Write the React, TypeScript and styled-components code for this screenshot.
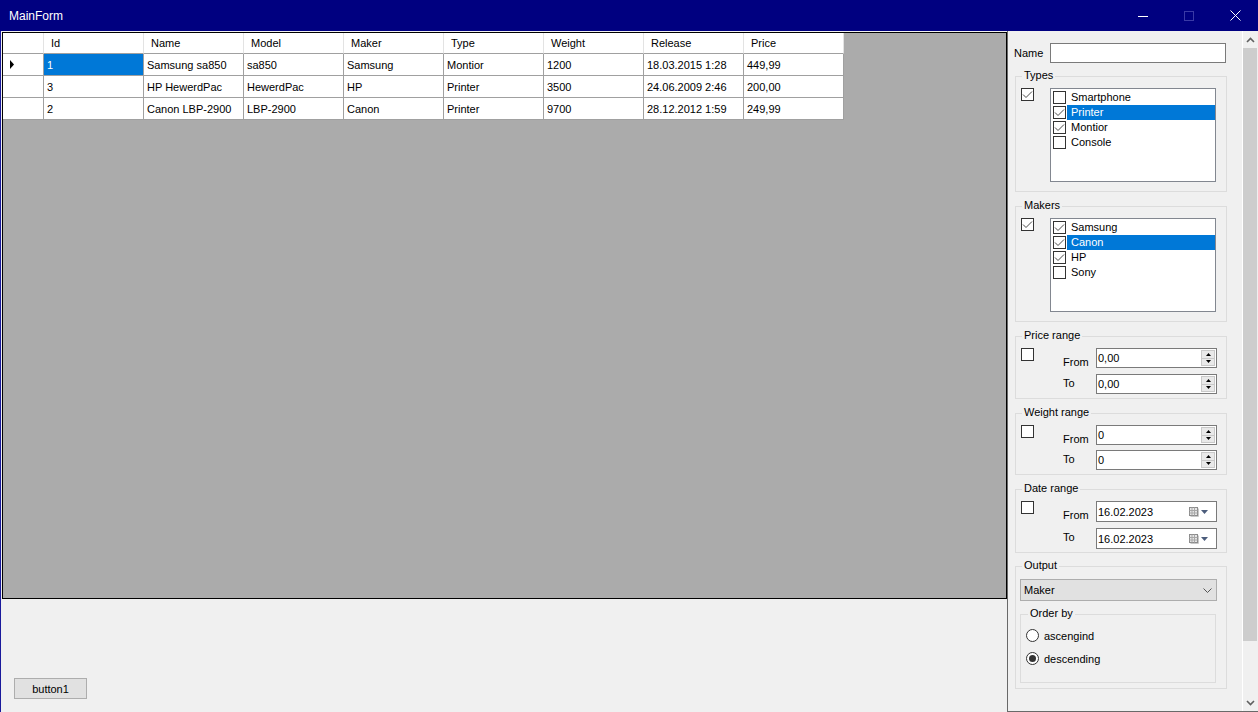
import React from 'react';
import styled, { createGlobalStyle } from 'styled-components';

const GlobalStyle = createGlobalStyle`
  html, body {
    margin: 0;
    padding: 0;
    background: #f0f0f0;
  }
  body {
    font-family: 'Liberation Sans', Arial, sans-serif;
    font-size: 11px;
    color: #000;
  }
  * {
    box-sizing: border-box;
  }
`;

const columns = ['Id', 'Name', 'Model', 'Maker', 'Type', 'Weight', 'Release', 'Price'];

const rows = [
  ['1', 'Samsung sa850', 'sa850', 'Samsung', 'Montior', '1200', '18.03.2015 1:28', '449,99'],
  ['3', 'HP HewerdPac', 'HewerdPac', 'HP', 'Printer', '3500', '24.06.2009 2:46', '200,00'],
  ['2', 'Canon LBP-2900', 'LBP-2900', 'Canon', 'Printer', '9700', '28.12.2012 1:59', '249,99'],
];

const types = [
  { label: 'Smartphone', checked: false, selected: false },
  { label: 'Printer', checked: true, selected: true },
  { label: 'Montior', checked: true, selected: false },
  { label: 'Console', checked: false, selected: false },
];

const makers = [
  { label: 'Samsung', checked: true, selected: false },
  { label: 'Canon', checked: true, selected: true },
  { label: 'HP', checked: true, selected: false },
  { label: 'Sony', checked: false, selected: false },
];

const Window = styled.div`
  width: 1258px;
  height: 712px;
  display: flex;
  flex-direction: column;
  overflow: hidden;
  background: #f0f0f0;
`;

const TitleBar = styled.div`
  height: 31px;
  flex: none;
  display: flex;
  align-items: center;
  background: #000080;
  color: #fff;
  font-size: 12px;
  padding-left: 9px;
`;

const Title = styled.span`
  flex: 1;
`;

const CaptionButton = styled.div`
  width: 46px;
  height: 31px;
  display: flex;
  align-items: center;
  justify-content: center;
`;

const Body = styled.div`
  flex: 1;
  display: flex;
  border-left: 1px solid #1a1a9c;
  min-height: 0;
`;

const LeftArea = styled.div`
  width: 1006px;
  display: flex;
  flex-direction: column;
  padding-top: 1px;
`;

const GridView = styled.div`
  margin-left: 1px;
  width: 1005px;
  height: 567px;
  border: 1px solid #000;
  background: #ababab;
  flex: none;
`;

const Table = styled.div`
  display: grid;
  grid-template-columns: 41px repeat(8, 100px);
  width: 841px;
`;

const Cell = styled.div<{ $head?: boolean; $selected?: boolean; $lead?: boolean }>`
  height: ${(p) => (p.$head ? 21 : 22)}px;
  display: flex;
  align-items: center;
  white-space: nowrap;
  overflow: hidden;
  padding-left: ${(p) => (p.$head ? 7 : 3)}px;
  background: ${(p) => (p.$selected ? '#0078d7' : '#fff')};
  color: ${(p) => (p.$selected ? '#fff' : '#000')};
  border-right: 1px solid ${(p) => (p.$head ? '#e3e3e3' : '#a0a0a0')};
  border-bottom: 1px solid #a0a0a0;
`;

const Footer = styled.div`
  flex: 1;
  display: flex;
  align-items: flex-end;
  padding: 0 0 13px 13px;
`;

const Button = styled.div`
  width: 73px;
  height: 21px;
  display: flex;
  align-items: center;
  justify-content: center;
  background: #e1e1e1;
  border: 1px solid #adadad;
`;

const SidePanel = styled.div`
  width: 251px;
  display: flex;
  border-left: 1px solid #696969;
  border-bottom: 1px solid #696969;
`;

const PanelBody = styled.div`
  width: 234px;
  padding: 12px 0 0 7px;
  display: flex;
  flex-direction: column;
`;

const NameRow = styled.div`
  display: flex;
  align-items: center;
  margin-left: -1px;
`;

const NameLabel = styled.span`
  width: 36px;
`;

const TextBox = styled.div<{ $width: number; $height?: number }>`
  width: ${(p) => p.$width}px;
  height: ${(p) => p.$height ?? 20}px;
  border: 1px solid #7a7a7a;
  background: #fff;
  display: flex;
  align-items: center;
`;

const Group = styled.div<{ $mt: number; $height: number; $width?: number; $pt?: number; $pl?: number }>`
  position: relative;
  width: ${(p) => p.$width ?? 212}px;
  height: ${(p) => p.$height}px;
  margin-top: ${(p) => p.$mt}px;
  border: 1px solid #dcdcdc;
  padding: ${(p) => p.$pt ?? 11}px 0 0 ${(p) => p.$pl ?? 5}px;
  flex: none;
`;

const Legend = styled.span<{ $left?: number }>`
  position: absolute;
  top: -8px;
  left: ${(p) => p.$left ?? 6}px;
  padding: 0 2px;
  line-height: 13px;
  background: #f0f0f0;
`;

const GroupRow = styled.div`
  display: flex;
  align-items: flex-start;
`;

const Box = styled.div`
  width: 13px;
  height: 13px;
  border: 1px solid #333;
  background: #fff;
  flex: none;
  display: flex;
  align-items: center;
  justify-content: center;
`;

const ListBox = styled.div`
  width: 166px;
  height: 94px;
  margin-left: 16px;
  border: 1px solid #828790;
  background: #fff;
  padding: 1px 0 0 2px;
`;

const ListItem = styled.div`
  height: 15px;
  display: flex;
  align-items: center;
`;

const ItemLabel = styled.span<{ $selected: boolean }>`
  flex: 1;
  height: 15px;
  line-height: 15px;
  margin-left: 1px;
  padding-left: 4px;
  background: ${(p) => (p.$selected ? '#0078d7' : 'transparent')};
  color: ${(p) => (p.$selected ? '#fff' : '#000')};
`;

const RangeGrid = styled.div<{ $rowHeight: number; $gap: number }>`
  display: grid;
  grid-template-columns: 42px 33px 121px;
  grid-template-rows: ${(p) => p.$rowHeight}px ${(p) => p.$rowHeight}px;
  row-gap: ${(p) => p.$gap}px;
`;

const RangeLabel = styled.span<{ $offset: number }>`
  line-height: 13px;
  margin-top: ${(p) => p.$offset}px;
`;

const Value = styled.span`
  flex: 1;
  padding-left: 1px;
`;

const Spin = styled.div`
  width: 14px;
  height: 16px;
  margin: 1px 1px 0 0;
  align-self: flex-start;
  display: flex;
  flex-direction: column;
`;

const SpinButton = styled.div`
  flex: 1;
  background: #e9e9e9;
  border: 1px solid #c9c9c9;
  display: flex;
  align-items: center;
  justify-content: center;
  & + & {
    border-top: none;
  }
`;

const DateIcons = styled.div`
  display: flex;
  align-items: center;
  gap: 2px;
  margin-right: 8px;
`;

const Combo = styled.div`
  width: 197px;
  height: 22px;
  background: #e1e1e1;
  border: 1px solid #adadad;
  display: flex;
  align-items: center;
  padding: 0 4px 0 3px;
  justify-content: space-between;
`;

const RadioRow = styled.div`
  height: 13px;
  display: flex;
  align-items: center;
  gap: 5px;
  & + & {
    margin-top: 10px;
  }
`;

const RadioCircle = styled.div<{ $checked: boolean }>`
  width: 13px;
  height: 13px;
  border-radius: 50%;
  border: 1px solid #333;
  background: #fff;
  display: flex;
  align-items: center;
  justify-content: center;
  &::after {
    content: '';
    width: 7px;
    height: 7px;
    border-radius: 50%;
    background: ${(p) => (p.$checked ? '#333' : 'transparent')};
  }
`;

const ScrollBar = styled.div`
  width: 16px;
  border-left: 1px solid #fff;
  background: #f0f0f0;
  display: flex;
  flex-direction: column;
`;

const ScrollArrow = styled.div`
  height: 17px;
  flex: none;
  display: flex;
  align-items: center;
  justify-content: center;
`;

const Track = styled.div`
  flex: 1;
`;

const Thumb = styled.div`
  width: 14px;
  height: 593px;
  background: #cdcdcd;
`;

const Check = () => (
  <svg width="11" height="11" viewBox="0 0 11 11">
    <polyline points="1,5.5 4,8.5 10,2.5" fill="none" stroke="#4a4a4a" strokeWidth="1" />
  </svg>
);

const CheckBox = ({ checked }: { checked: boolean }) => <Box>{checked && <Check />}</Box>;

const CheckList = ({ items }: { items: typeof types }) => (
  <ListBox>
    {items.map((it) => (
      <ListItem key={it.label}>
        <CheckBox checked={it.checked} />
        <ItemLabel $selected={it.selected}>{it.label}</ItemLabel>
      </ListItem>
    ))}
  </ListBox>
);

const Numeric = ({ value }: { value: string }) => (
  <TextBox $width={121} $height={20}>
    <Value>{value}</Value>
    <Spin>
      <SpinButton>
        <svg width="5" height="3" viewBox="0 0 5 3">
          <polygon points="0,3 2.5,0 5,3" fill="#000" />
        </svg>
      </SpinButton>
      <SpinButton>
        <svg width="5" height="3" viewBox="0 0 5 3">
          <polygon points="0,0 5,0 2.5,3" fill="#000" />
        </svg>
      </SpinButton>
    </Spin>
  </TextBox>
);

const DateBox = ({ value }: { value: string }) => (
  <TextBox $width={121} $height={21}>
    <Value>{value}</Value>
    <DateIcons>
      <svg width="10" height="10" viewBox="0 0 10 10">
        <rect x="0.5" y="0.5" width="8" height="8" fill="#e6e6e6" stroke="#8c8c8c" />
        <path d="M0.5 3.5H8.5M0.5 6H8.5M3 0.5V8.5M5.5 0.5V8.5" stroke="#a8a8a8" />
        <path d="M9.5 1.5V9.5H1.5" stroke="#c8c8c8" fill="none" />
      </svg>
      <svg width="7" height="4" viewBox="0 0 7 4">
        <polygon points="0,0 7,0 3.5,4" fill="#4c5d7c" />
      </svg>
    </DateIcons>
  </TextBox>
);

const RangeGroup = ({
  title,
  mt,
  height,
  children,
  rowHeight,
  gap,
}: {
  title: string;
  mt: number;
  height: number;
  rowHeight: number;
  gap: number;
  children: [React.ReactNode, React.ReactNode];
}) => (
  <Group $mt={mt} $height={height}>
    <Legend>{title}</Legend>
    <RangeGrid $rowHeight={rowHeight} $gap={gap}>
      <CheckBox checked={false} />
      <RangeLabel $offset={8}>From</RangeLabel>
      {children[0]}
      <span />
      <RangeLabel $offset={3}>To</RangeLabel>
      {children[1]}
    </RangeGrid>
  </Group>
);

export default function App() {
  return (
    <>
      <GlobalStyle />
      <Window>
        <TitleBar>
          <Title>MainForm</Title>
          <CaptionButton>
            <svg width="10" height="10" viewBox="0 0 10 10">
              <path d="M0 5.5H10" stroke="#fff" />
            </svg>
          </CaptionButton>
          <CaptionButton>
            <svg width="10" height="10" viewBox="0 0 10 10">
              <rect x="0.5" y="0.5" width="9" height="9" fill="none" stroke="#3a3aa6" />
            </svg>
          </CaptionButton>
          <CaptionButton>
            <svg width="11" height="11" viewBox="0 0 11 11">
              <path d="M0.5 0.5L10.5 10.5M10.5 0.5L0.5 10.5" stroke="#fff" />
            </svg>
          </CaptionButton>
        </TitleBar>
        <Body>
          <LeftArea>
            <GridView>
              <Table>
                <Cell $head />
                {columns.map((c) => (
                  <Cell key={c} $head>
                    {c}
                  </Cell>
                ))}
                {rows.map((r, ri) => (
                  <React.Fragment key={r[0]}>
                    <Cell>
                      {ri === 0 && (
                        <svg width="12" height="9" viewBox="0 0 12 9">
                          <polygon points="4,0 8,4.5 4,9" fill="#000" />
                        </svg>
                      )}
                    </Cell>
                    {r.map((v, ci) => (
                      <Cell key={ci} $selected={ri === 0 && ci === 0}>
                        {v}
                      </Cell>
                    ))}
                  </React.Fragment>
                ))}
              </Table>
            </GridView>
            <Footer>
              <Button>button1</Button>
            </Footer>
          </LeftArea>
          <SidePanel>
            <PanelBody>
              <NameRow>
                <NameLabel>Name</NameLabel>
                <TextBox $width={176} />
              </NameRow>

              <Group $mt={13} $height={116}>
                <Legend>Types</Legend>
                <GroupRow>
                  <CheckBox checked />
                  <CheckList items={types} />
                </GroupRow>
              </Group>

              <Group $mt={14} $height={116}>
                <Legend>Makers</Legend>
                <GroupRow>
                  <CheckBox checked />
                  <CheckList items={makers} />
                </GroupRow>
              </Group>

              <RangeGroup title="Price range" mt={14} height={63} rowHeight={20} gap={6}>
                <Numeric value="0,00" />
                <Numeric value="0,00" />
              </RangeGroup>

              <RangeGroup title="Weight range" mt={14} height={62} rowHeight={20} gap={5}>
                <Numeric value="0" />
                <Numeric value="0" />
              </RangeGroup>

              <RangeGroup title="Date range" mt={14} height={64} rowHeight={21} gap={6}>
                <DateBox value="16.02.2023" />
                <DateBox value="16.02.2023" />
              </RangeGroup>

              <Group $mt={13} $height={123} $pt={12} $pl={4}>
                <Legend>Output</Legend>
                <Combo>
                  <span>Maker</span>
                  <svg width="9" height="5" viewBox="0 0 9 5">
                    <path d="M0.5 0.5L4.5 4.5L8.5 0.5" fill="none" stroke="#555" />
                  </svg>
                </Combo>
                <Group $mt={13} $height={69} $width={196} $pt={14} $pl={5}>
                  <Legend $left={7}>Order by</Legend>
                  <RadioRow>
                    <RadioCircle $checked={false} />
                    <span>ascengind</span>
                  </RadioRow>
                  <RadioRow>
                    <RadioCircle $checked />
                    <span>descending</span>
                  </RadioRow>
                </Group>
              </Group>
            </PanelBody>
            <ScrollBar>
              <ScrollArrow>
                <svg width="9" height="6" viewBox="0 0 9 6">
                  <path d="M1 5L4.5 1.5L8 5" fill="none" stroke="#606060" strokeWidth="1.6" />
                </svg>
              </ScrollArrow>
              <Track>
                <Thumb />
              </Track>
              <ScrollArrow>
                <svg width="9" height="6" viewBox="0 0 9 6">
                  <path d="M1 1L4.5 4.5L8 1" fill="none" stroke="#606060" strokeWidth="1.6" />
                </svg>
              </ScrollArrow>
            </ScrollBar>
          </SidePanel>
        </Body>
      </Window>
    </>
  );
}
